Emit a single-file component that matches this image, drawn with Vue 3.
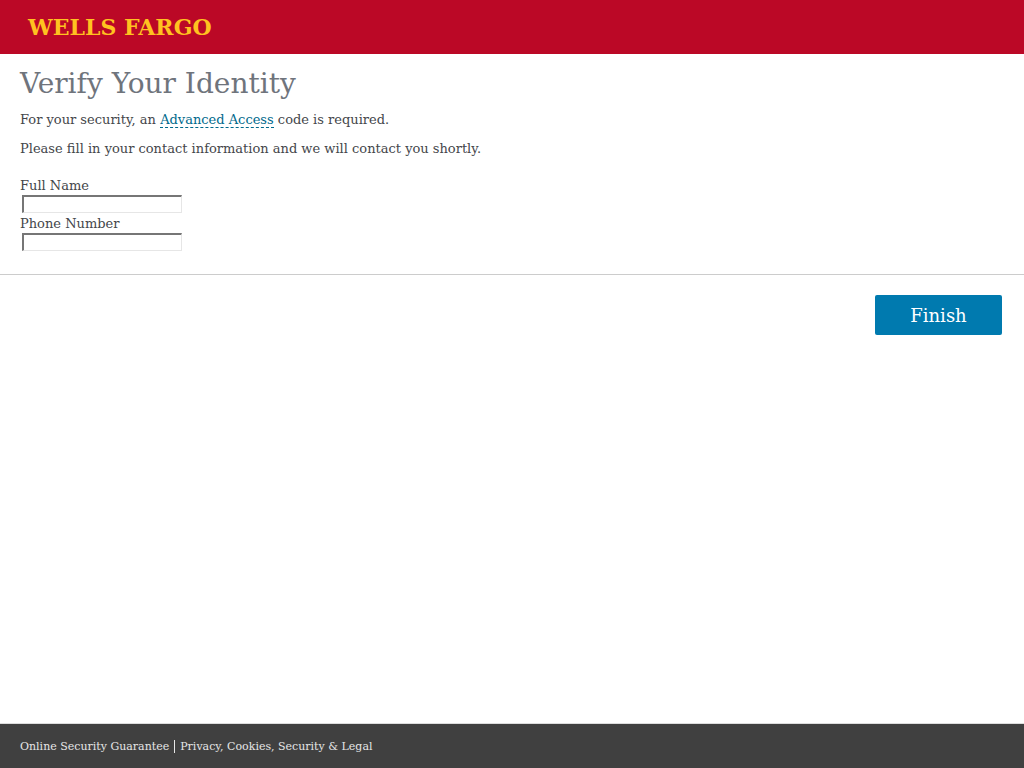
<script setup>
import { ref } from 'vue'

const fullName = ref('')
const phone = ref('')
</script>

<template>
  <div class="page">
    <header class="masthead">
      <span class="brand">WELLS FARGO</span>
    </header>
    <main>
      <form @submit.prevent>
        <section class="content">
          <h1>Verify Your Identity</h1>
          <p>For your security, an <a href="#">Advanced Access</a> code is required.</p>
          <p>Please fill in your contact information and we will contact you shortly.</p>
          <div class="fields">
            <label for="full-name">Full Name</label>
            <input id="full-name" v-model="fullName" type="text" />
            <label for="phone">Phone Number</label>
            <input id="phone" v-model="phone" type="text" />
          </div>
        </section>
        <div class="actions">
          <button type="submit">Finish</button>
        </div>
      </form>
    </main>
    <footer>
      <a href="#">Online Security Guarantee</a>
      <span class="divider"></span>
      <a href="#">Privacy, Cookies, Security &amp; Legal</a>
    </footer>
  </div>
</template>

<style>
body {
  margin: 0;
  background: #fff;
}
</style>

<style scoped>
.page {
  display: flex;
  flex-direction: column;
  min-height: 100vh;
  color: #44464a;
  font-family: "DejaVu Serif", serif;
  font-size: 13px;
}
.masthead {
  display: flex;
  align-items: center;
  height: 54px;
  padding: 0 28px;
  background: #bb0826;
}
.brand {
  color: #ffc220;
  font-size: 22px;
  font-weight: bold;
  line-height: 24px;
}
main {
  flex: 1;
}
.content {
  padding: 13px 20px 21px;
  border-bottom: 1px solid #ccc;
}
h1 {
  margin: 0 0 9px;
  color: #6f747c;
  font-size: 28px;
  font-weight: normal;
  line-height: 34px;
}
p {
  margin: 0 0 9px;
  line-height: 20px;
}
p a {
  border-bottom: 1px dashed #00698c;
  color: #00698c;
  text-decoration: none;
}
.fields {
  display: flex;
  flex-direction: column;
  align-items: flex-start;
  padding-top: 9px;
}
label {
  line-height: 18px;
}
input {
  box-sizing: border-box;
  width: 160px;
  height: 18px;
  margin: 0 2px 2px;
  padding: 1px;
  border-style: solid;
  border-width: 2px 1px 1px 2px;
  border-color: #767676 #e6e6e6 #e6e6e6 #767676;
  background: #fff;
  font-family: inherit;
  font-size: 11px;
}
.actions {
  display: flex;
  justify-content: flex-end;
  padding: 20px 22px;
}
button {
  width: 127px;
  height: 40px;
  padding: 0;
  border: 0;
  border-radius: 2px;
  background: #007aaf;
  color: #fff;
  font-family: inherit;
  font-size: 18px;
}
footer {
  display: flex;
  align-items: center;
  gap: 5px;
  height: 44px;
  padding: 0 20px;
  border-top: 1px solid #ddd;
  background: #404040;
  font-size: 11px;
}
footer a {
  color: #e6e6e6;
  text-decoration: none;
}
.divider {
  width: 1px;
  height: 13px;
  background: #e6e6e6;
}
</style>
